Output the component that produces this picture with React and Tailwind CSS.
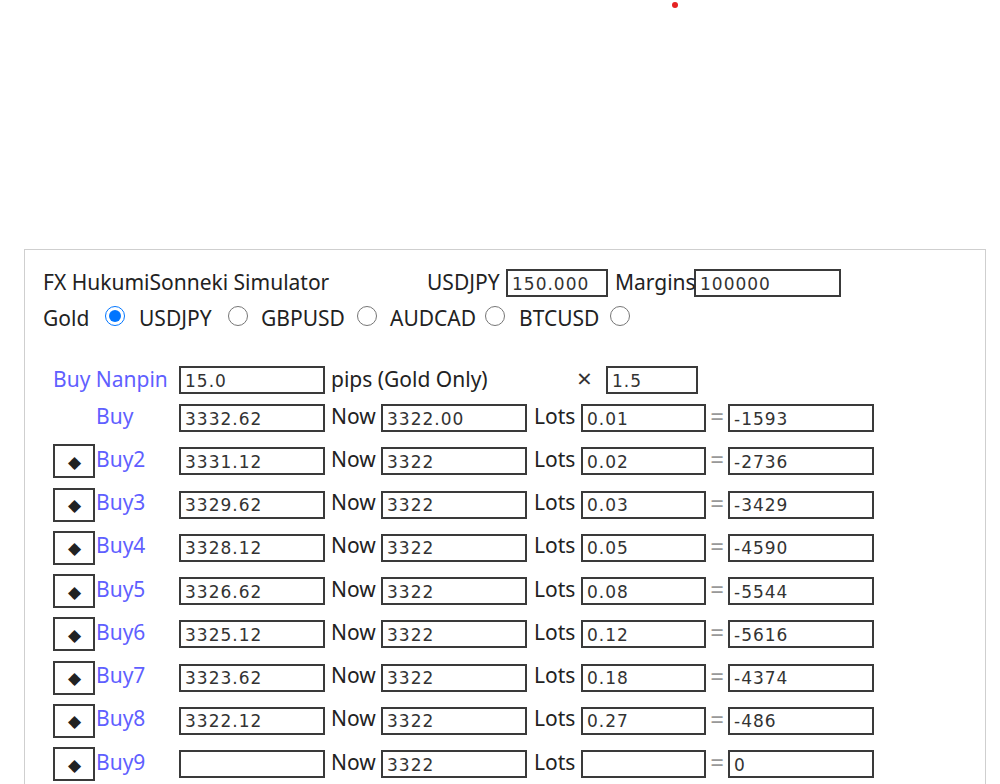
import { useState } from 'react'

const rows = [
  { name: 'Buy', price: '3332.62', now: '3322.00', lots: '0.01', pl: '-1593', btn: false },
  { name: 'Buy2', price: '3331.12', now: '3322', lots: '0.02', pl: '-2736', btn: true },
  { name: 'Buy3', price: '3329.62', now: '3322', lots: '0.03', pl: '-3429', btn: true },
  { name: 'Buy4', price: '3328.12', now: '3322', lots: '0.05', pl: '-4590', btn: true },
  { name: 'Buy5', price: '3326.62', now: '3322', lots: '0.08', pl: '-5544', btn: true },
  { name: 'Buy6', price: '3325.12', now: '3322', lots: '0.12', pl: '-5616', btn: true },
  { name: 'Buy7', price: '3323.62', now: '3322', lots: '0.18', pl: '-4374', btn: true },
  { name: 'Buy8', price: '3322.12', now: '3322', lots: '0.27', pl: '-486', btn: true },
  { name: 'Buy9', price: '', now: '3322', lots: '', pl: '0', btn: true },
]

const pairs = [
  { label: 'Gold', w: 'w-[62px]', ml: 'ml-0' },
  { label: 'USDJPY', w: 'w-[89px]', ml: 'ml-[14px]' },
  { label: 'GBPUSD', w: 'w-[96px]', ml: 'ml-[13px]' },
  { label: 'AUDCAD', w: 'w-[95px]', ml: 'ml-[13px]' },
  { label: 'BTCUSD', w: 'w-[91px]', ml: 'ml-[14px]' },
]

function Box({ value, w }) {
  return (
    <input
      type="text"
      defaultValue={value}
      className={`${w} h-[28px] shrink-0 border-2 border-[#3a3a3a] bg-white pl-[4px] pt-[1px] text-[17px] tracking-[1px] text-[#333] outline-none`}
      style={{ fontFamily: '"DejaVu Sans", Verdana, sans-serif' }}
    />
  )
}

export default function App() {
  const [pair, setPair] = useState('Gold')

  return (
    <div className="min-h-screen bg-white text-[21px] text-[#222]" style={{ fontFamily: '"Noto Sans", Arial, sans-serif' }}>
      {/* top area */}
      <div className="h-[249px]">
        <div className="ml-[672px] pt-[2px]">
          <div className="w-[6px] h-[6px] rounded-full bg-[#e52222]" />
        </div>
      </div>

      <div className="ml-[24px] w-[962px] border border-[#cfcfcf] px-[18px] pt-[19px] pb-[20px]">
        {/* title row */}
        <div className="flex items-center h-[28px]">
          <span className="w-[384px] leading-none whitespace-nowrap -translate-y-[1px]">FX HukumiSonneki Simulator</span>
          <span className="w-[79px] leading-none -translate-y-[1px]">USDJPY</span>
          <Box value="150.000" w="w-[102px]" />
          <span className="ml-[7px] w-[79px] leading-none -translate-y-[1px]">Margins</span>
          <Box value="100000" w="w-[147px]" />
        </div>

        {/* pair select */}
        <div className="flex items-center h-[28px] mt-[7px]">
          {pairs.map(p => (
            <div key={p.label} className={`flex items-center ${p.ml}`}>
              <span className={`${p.w} leading-none`}>{p.label}</span>
              <input
                type="radio"
                name="pair"
                checked={pair === p.label}
                onChange={() => setPair(p.label)}
                className="m-0 w-[20px] h-[20px] shrink-0 -translate-y-[2px]"
              />
            </div>
          ))}
        </div>

        {/* nanpin */}
        <div className="flex items-center h-[28px] mt-[34px] ml-[10px]">
          <span className="w-[126px] leading-none text-[#5f5fff] whitespace-nowrap -translate-y-[1px]">Buy Nanpin</span>
          <Box value="15.0" w="w-[146px]" />
          <span className="w-[252px] pl-[6px] leading-none whitespace-nowrap -translate-y-[1px]">pips (Gold Only)</span>
          <span className="w-[29px] leading-none text-[26px] text-[#333] -translate-y-[2px]">×</span>
          <Box value="1.5" w="w-[92px]" />
        </div>

        {/* buy rows */}
        <div className="flex flex-col gap-[15.25px] mt-[10px] ml-[10px]">
          {rows.map(r => (
            <div key={r.name} className="flex items-center h-[28px]">
              {r.btn ? (
                <button className="w-[42px] h-[34px] shrink-0 border-2 border-[#3a3a3a] bg-white flex items-center justify-center text-[17px] text-[#222] leading-none">
                  ◆
                </button>
              ) : (
                <span className="w-[42px] shrink-0" />
              )}
              <span className="w-[84px] pl-[1px] leading-none text-[#5f5fff] -translate-y-[2px]">{r.name}</span>
              <Box value={r.price} w="w-[146px]" />
              <span className="w-[56px] pl-[6px] leading-none -translate-y-[2px]">Now</span>
              <Box value={r.now} w="w-[146px]" />
              <span className="w-[54px] pl-[7px] leading-none -translate-y-[2px]">Lots</span>
              <Box value={r.lots} w="w-[125px]" />
              <span className="w-[22px] text-center leading-none text-[24px] text-[#999] -translate-y-[2px]">=</span>
              <Box value={r.pl} w="w-[146px]" />
            </div>
          ))}
        </div>
      </div>
    </div>
  )
}
